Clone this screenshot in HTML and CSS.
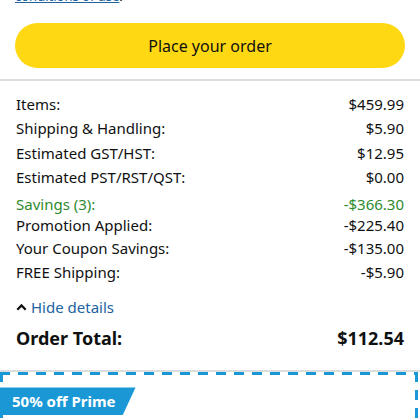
FILE: index.html
```html
<!DOCTYPE html>
<html>
<head>
<meta charset="utf-8">
<link rel="stylesheet" href="styles.css">
</head>
<body>
<div class="terms"><a class="terms-link" href="#">conditions of use</a>.</div>
<div class="btn-wrap"><button class="place-btn">Place your order</button></div>
<div class="summary">
  <div class="row"><span>Items:</span><span>$459.99</span></div>
  <div class="row"><span>Shipping &amp; Handling:</span><span>$5.90</span></div>
  <div class="row"><span>Estimated GST/HST:</span><span>$12.95</span></div>
  <div class="row"><span>Estimated PST/RST/QST:</span><span>$0.00</span></div>
  <div class="row savings"><span>Savings (3):</span><span>-$366.30</span></div>
  <div class="row sub first"><span>Promotion Applied:</span><span>-$225.40</span></div>
  <div class="row sub"><span>Your Coupon Savings:</span><span>-$135.00</span></div>
  <div class="row sub"><span>FREE Shipping:</span><span>-$5.90</span></div>
  <div class="hide"><svg class="caret" width="11" height="8" viewBox="0 0 11 8"><path d="M1.3 6.8 L5.5 2.4 L9.7 6.8" fill="none" stroke="#0F1111" stroke-width="2.2"/></svg><span>Hide details</span></div>
  <div class="row total"><span>Order Total:</span><span>$112.54</span></div>
</div>
<div class="promo">
  <div class="badge">50% off Prime</div>
</div>
</body>
</html>
```
FILE: styles.css
```css
html, body {
  margin: 0;
  padding: 0;
  background: #fff;
  overflow: hidden;
}
body {
  font-family: "Noto Sans", "Open Sans", sans-serif;
  color: #0F1111;
  font-size: 15px;
  width: 420px;
  height: 420px;
}
.terms {
  padding: 0 15px;
  margin-top: -12px;
  line-height: 17px;
  font-size: 13px;
}
.terms-link {
  color: #2162A1;
  text-decoration: underline;
}
.btn-wrap {
  padding: 18px 15px 11px;
  border-bottom: 2px solid #DDDDDD;
}
.place-btn {
  display: block;
  width: 100%;
  height: 45px;
  border: none;
  border-radius: 23px;
  background: #FFD814;
  color: #0F1111;
  font-family: inherit;
  font-size: 16px;
  padding: 0;
}
.summary {
  padding: 11px 16px 19px 16px;
  border-bottom: 2px solid #DDDDDD;
}
.row {
  display: flex;
  justify-content: space-between;
  line-height: 24.4px;
}
.savings {
  color: #2E8B2E;
  margin-top: 4px;
  line-height: 21px;
}
.sub.first {
  line-height: 21px;
}
.hide {
  display: flex;
  align-items: center;
  gap: 4px;
  margin-top: 12px;
  line-height: 22px;
  color: #2162A1;
}
.caret {
  display: block;
}
.total {
  font-weight: bold;
  font-size: 18px;
  margin-top: 7px;
  line-height: 26px;
}
.promo {
  height: 35px;
  margin-right: 2px;
  background-image:
    repeating-linear-gradient(to right, #1A98D5 0 10px, transparent 10px 18px),
    repeating-linear-gradient(to bottom, #1A98D5 0 10px, transparent 10px 18px),
    repeating-linear-gradient(to bottom, #1A98D5 0 10px, transparent 10px 18px);
  background-size: 100% 3px, 3px 100%, 3px 100%;
  background-position: 0 0, 0 0, 100% 0;
  background-repeat: no-repeat;
  padding-top: 15px;
}
.badge {
  width: fit-content;
  background: #1A98D5;
  color: #fff;
  font-weight: bold;
  font-size: 15px;
  line-height: 28px;
  padding: 0 20px 0 12px;
  clip-path: polygon(0 0, 100% 0, calc(100% - 13px) 100%, 0 100%);
}
```
